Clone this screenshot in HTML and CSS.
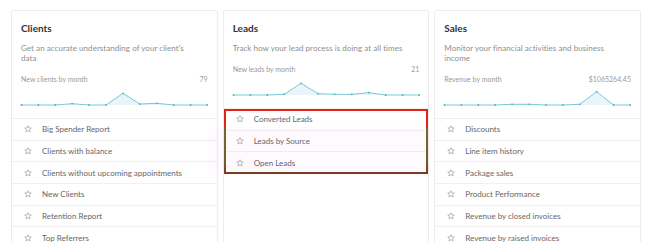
FILE: index.html
```html
<!DOCTYPE html>
<html lang="en">
<head>
<meta charset="utf-8">
<title>Reports</title>
<link rel="stylesheet" href="styles.css">
</head>
<body>
<div class="grid">
  <section class="card">
    <div class="head">
      <h2 class="title">Clients</h2>
      <p class="desc">Get an accurate understanding of your client's data</p>
      <div class="metric"><span>New clients by month</span><span>79</span></div>
      <svg class="chart" viewBox="0 0 187 24" preserveAspectRatio="none">
        <polygon class="area" points="0.5,21 17.4,21 34.4,21 51.3,19.7 68.2,21 85.2,21 102.1,9.3 119.1,20 136,19.3 152.9,21 169.9,21 186.5,21"/>
        <polyline class="line" points="0.5,21 17.4,21 34.4,21 51.3,19.7 68.2,21 85.2,21 102.1,9.3 119.1,20 136,19.3 152.9,21 169.9,21 186.5,21"/>
        <g class="dots"><circle cx="0.5" cy="21" r="0.9"/><circle cx="17.4" cy="21" r="0.9"/><circle cx="34.4" cy="21" r="0.9"/><circle cx="51.3" cy="19.7" r="0.9"/><circle cx="68.2" cy="21" r="0.9"/><circle cx="85.2" cy="21" r="0.9"/><circle cx="102.1" cy="9.3" r="0.9"/><circle cx="119.1" cy="20" r="0.9"/><circle cx="136" cy="19.3" r="0.9"/><circle cx="152.9" cy="21" r="0.9"/><circle cx="169.9" cy="21" r="0.9"/><circle cx="186.5" cy="21" r="0.9"/></g>
      </svg>
    </div>
    <ul class="list">
      <li class="row"><svg class="star" viewBox="0 0 10 10"><path d="M5 0.9 L6.2 3.6 L9.1 3.8 L6.9 5.7 L7.6 8.6 L5 7.1 L2.4 8.6 L3.1 5.7 L0.9 3.8 L3.8 3.6 Z"/></svg><span>Big Spender Report</span></li>
      <li class="row"><svg class="star" viewBox="0 0 10 10"><path d="M5 0.9 L6.2 3.6 L9.1 3.8 L6.9 5.7 L7.6 8.6 L5 7.1 L2.4 8.6 L3.1 5.7 L0.9 3.8 L3.8 3.6 Z"/></svg><span>Clients with balance</span></li>
      <li class="row"><svg class="star" viewBox="0 0 10 10"><path d="M5 0.9 L6.2 3.6 L9.1 3.8 L6.9 5.7 L7.6 8.6 L5 7.1 L2.4 8.6 L3.1 5.7 L0.9 3.8 L3.8 3.6 Z"/></svg><span>Clients without upcoming appointments</span></li>
      <li class="row"><svg class="star" viewBox="0 0 10 10"><path d="M5 0.9 L6.2 3.6 L9.1 3.8 L6.9 5.7 L7.6 8.6 L5 7.1 L2.4 8.6 L3.1 5.7 L0.9 3.8 L3.8 3.6 Z"/></svg><span>New Clients</span></li>
      <li class="row"><svg class="star" viewBox="0 0 10 10"><path d="M5 0.9 L6.2 3.6 L9.1 3.8 L6.9 5.7 L7.6 8.6 L5 7.1 L2.4 8.6 L3.1 5.7 L0.9 3.8 L3.8 3.6 Z"/></svg><span>Retention Report</span></li>
      <li class="row"><svg class="star" viewBox="0 0 10 10"><path d="M5 0.9 L6.2 3.6 L9.1 3.8 L6.9 5.7 L7.6 8.6 L5 7.1 L2.4 8.6 L3.1 5.7 L0.9 3.8 L3.8 3.6 Z"/></svg><span>Top Referrers</span></li>
    </ul>
  </section>

  <section class="card">
    <div class="head">
      <h2 class="title">Leads</h2>
      <p class="desc">Track how your lead process is doing at all times</p>
      <div class="metric"><span>New leads by month</span><span>21</span></div>
      <svg class="chart" viewBox="0 0 187 24" preserveAspectRatio="none">
        <polygon class="area" points="0.5,21 17.4,21 34.4,21 51.3,20.3 68.2,9.3 85.2,19.7 102.1,20.3 119.1,20.3 136,18.7 152.9,21 169.9,21 186.5,21"/>
        <polyline class="line" points="0.5,21 17.4,21 34.4,21 51.3,20.3 68.2,9.3 85.2,19.7 102.1,20.3 119.1,20.3 136,18.7 152.9,21 169.9,21 186.5,21"/>
        <g class="dots"><circle cx="0.5" cy="21" r="0.9"/><circle cx="17.4" cy="21" r="0.9"/><circle cx="34.4" cy="21" r="0.9"/><circle cx="51.3" cy="20.3" r="0.9"/><circle cx="68.2" cy="9.3" r="0.9"/><circle cx="85.2" cy="19.7" r="0.9"/><circle cx="102.1" cy="20.3" r="0.9"/><circle cx="119.1" cy="20.3" r="0.9"/><circle cx="136" cy="18.7" r="0.9"/><circle cx="152.9" cy="21" r="0.9"/><circle cx="169.9" cy="21" r="0.9"/><circle cx="186.5" cy="21" r="0.9"/></g>
      </svg>
    </div>
    <ul class="list highlighted">
      <li class="row"><svg class="star" viewBox="0 0 10 10"><path d="M5 0.9 L6.2 3.6 L9.1 3.8 L6.9 5.7 L7.6 8.6 L5 7.1 L2.4 8.6 L3.1 5.7 L0.9 3.8 L3.8 3.6 Z"/></svg><span>Converted Leads</span></li>
      <li class="row"><svg class="star" viewBox="0 0 10 10"><path d="M5 0.9 L6.2 3.6 L9.1 3.8 L6.9 5.7 L7.6 8.6 L5 7.1 L2.4 8.6 L3.1 5.7 L0.9 3.8 L3.8 3.6 Z"/></svg><span>Leads by Source</span></li>
      <li class="row"><svg class="star" viewBox="0 0 10 10"><path d="M5 0.9 L6.2 3.6 L9.1 3.8 L6.9 5.7 L7.6 8.6 L5 7.1 L2.4 8.6 L3.1 5.7 L0.9 3.8 L3.8 3.6 Z"/></svg><span>Open Leads</span></li>
    </ul>
  </section>

  <section class="card">
    <div class="head">
      <h2 class="title">Sales</h2>
      <p class="desc">Monitor your financial activities and business income</p>
      <div class="metric"><span>Revenue by month</span><span>$1065264.45</span></div>
      <svg class="chart" viewBox="0 0 187 24" preserveAspectRatio="none">
        <polygon class="area" points="0.5,21 17.4,21 34.4,21 51.3,21 68.2,20.3 85.2,20.3 102.1,21 119.1,21 136,20.3 152.9,7.7 169.9,21 186.5,21"/>
        <polyline class="line" points="0.5,21 17.4,21 34.4,21 51.3,21 68.2,20.3 85.2,20.3 102.1,21 119.1,21 136,20.3 152.9,7.7 169.9,21 186.5,21"/>
        <g class="dots"><circle cx="0.5" cy="21" r="0.9"/><circle cx="17.4" cy="21" r="0.9"/><circle cx="34.4" cy="21" r="0.9"/><circle cx="51.3" cy="21" r="0.9"/><circle cx="68.2" cy="20.3" r="0.9"/><circle cx="85.2" cy="20.3" r="0.9"/><circle cx="102.1" cy="21" r="0.9"/><circle cx="119.1" cy="21" r="0.9"/><circle cx="136" cy="20.3" r="0.9"/><circle cx="152.9" cy="7.7" r="0.9"/><circle cx="169.9" cy="21" r="0.9"/><circle cx="186.5" cy="21" r="0.9"/></g>
      </svg>
    </div>
    <ul class="list">
      <li class="row"><svg class="star" viewBox="0 0 10 10"><path d="M5 0.9 L6.2 3.6 L9.1 3.8 L6.9 5.7 L7.6 8.6 L5 7.1 L2.4 8.6 L3.1 5.7 L0.9 3.8 L3.8 3.6 Z"/></svg><span>Discounts</span></li>
      <li class="row"><svg class="star" viewBox="0 0 10 10"><path d="M5 0.9 L6.2 3.6 L9.1 3.8 L6.9 5.7 L7.6 8.6 L5 7.1 L2.4 8.6 L3.1 5.7 L0.9 3.8 L3.8 3.6 Z"/></svg><span>Line item history</span></li>
      <li class="row"><svg class="star" viewBox="0 0 10 10"><path d="M5 0.9 L6.2 3.6 L9.1 3.8 L6.9 5.7 L7.6 8.6 L5 7.1 L2.4 8.6 L3.1 5.7 L0.9 3.8 L3.8 3.6 Z"/></svg><span>Package sales</span></li>
      <li class="row"><svg class="star" viewBox="0 0 10 10"><path d="M5 0.9 L6.2 3.6 L9.1 3.8 L6.9 5.7 L7.6 8.6 L5 7.1 L2.4 8.6 L3.1 5.7 L0.9 3.8 L3.8 3.6 Z"/></svg><span>Product Performance</span></li>
      <li class="row"><svg class="star" viewBox="0 0 10 10"><path d="M5 0.9 L6.2 3.6 L9.1 3.8 L6.9 5.7 L7.6 8.6 L5 7.1 L2.4 8.6 L3.1 5.7 L0.9 3.8 L3.8 3.6 Z"/></svg><span>Revenue by closed invoices</span></li>
      <li class="row"><svg class="star" viewBox="0 0 10 10"><path d="M5 0.9 L6.2 3.6 L9.1 3.8 L6.9 5.7 L7.6 8.6 L5 7.1 L2.4 8.6 L3.1 5.7 L0.9 3.8 L3.8 3.6 Z"/></svg><span>Revenue by raised invoices</span></li>
    </ul>
  </section>
</div>
</body>
</html>
```

FILE: styles.css
```css
* { box-sizing: border-box; }
html, body { margin: 0; padding: 0; background: #fff; }
body {
  font-family: "Lato", "Liberation Sans", sans-serif;
  color: #666;
  padding: 10px 4px 0 11px;
  overflow: hidden;
  height: 242px;
}
.grid {
  display: grid;
  grid-template-columns: repeat(3, 1fr);
  gap: 5px;
  height: 300px;
}
.card {
  border: 1px solid #ececec;
  border-radius: 2px;
  background: #fff;
  display: flex;
  flex-direction: column;
}
.head {
  padding: 11px 9px 0 9px;
  border-bottom: 1px solid #eeeeee;
}
.title {
  margin: 0;
  font-size: 10px;
  line-height: 12px;
  font-weight: 700;
  color: #333;
}
.desc {
  margin: 9px 0 0 0;
  max-width: 176px;
  font-size: 8px;
  line-height: 10px;
  letter-spacing: 0.05px;
  color: #8e8e8e;
}
.metric {
  margin-top: 11px;
  display: flex;
  justify-content: space-between;
  font-size: 7px;
  line-height: 10px;
  color: #9a9a9a;
}
.chart {
  display: block;
  width: 100%;
  height: 24px;
  margin-bottom: 10px;
  overflow: visible;
}
.area { fill: #e9f5f9; stroke: none; }
.line { fill: none; stroke: #6cc3d2; stroke-width: 0.9; }
.dots circle { fill: #4fb0c2; }
.list {
  list-style: none;
  margin: 0;
  padding: 0;
  position: relative;
}
.row {
  display: flex;
  align-items: center;
  height: 21.67px;
  border-bottom: 1px solid #f1f1f1;
  padding-left: 12px;
  font-size: 8px;
  color: #666;
}
.row:last-child { border-bottom: none; }
.star {
  width: 8px;
  height: 8px;
  flex: none;
  margin-right: 10px;
}
.star path { fill: none; stroke: #a0a0a0; stroke-width: 0.9; stroke-linejoin: round; }
.highlighted::before {
  content: "";
  position: absolute;
  left: -16px;
  right: -3px;
  top: 18px;
  bottom: -1px;
  background: rgba(255, 0, 190, 0.018);
  pointer-events: none;
}
.highlighted::after {
  content: "";
  position: absolute;
  inset: 0;
  border: 2px solid;
  border-image: linear-gradient(to bottom, #e2231a 0, #e2231a 24%, #6f6a36 32%, #765a2c 85%, #7a3a1c 100%) 1;
  pointer-events: none;
}
```
